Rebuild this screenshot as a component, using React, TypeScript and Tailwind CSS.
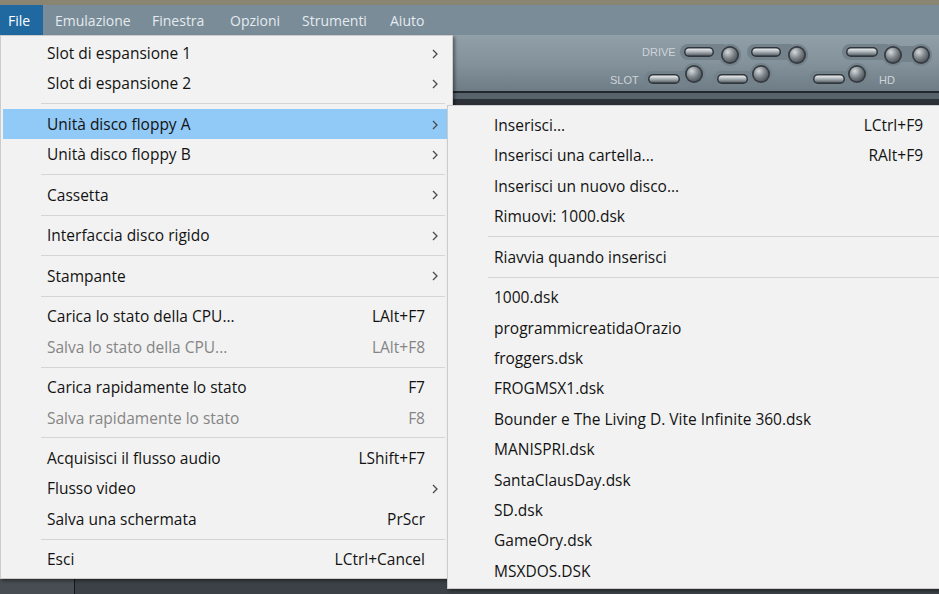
import React from 'react';

type Item =
  | 'sep'
  | { label: string; key?: string; sub?: boolean; disabled?: boolean; active?: boolean };

const MENUBAR = [
  { label: 'File', w: 'w-[43px]', pl: 'pl-[8px]', active: true },
  { label: 'Emulazione', w: 'w-[97px]', pl: 'pl-[12px]' },
  { label: 'Finestra', w: 'w-[78px]', pl: 'pl-[12px]' },
  { label: 'Opzioni', w: 'w-[73px]', pl: 'pl-[12px]' },
  { label: 'Strumenti', w: 'w-[87px]', pl: 'pl-[11px]' },
  { label: 'Aiuto', w: 'w-[58px]', pl: 'pl-[12px]' },
];

const FILE_MENU: Item[] = [
  { label: 'Slot di espansione 1', sub: true },
  { label: 'Slot di espansione 2', sub: true },
  'sep',
  { label: 'Unità disco floppy A', sub: true, active: true },
  { label: 'Unità disco floppy B', sub: true },
  'sep',
  { label: 'Cassetta', sub: true },
  'sep',
  { label: 'Interfaccia disco rigido', sub: true },
  'sep',
  { label: 'Stampante', sub: true },
  'sep',
  { label: 'Carica lo stato della CPU...', key: 'LAlt+F7' },
  { label: 'Salva lo stato della CPU...', key: 'LAlt+F8', disabled: true },
  'sep',
  { label: 'Carica rapidamente lo stato', key: 'F7' },
  { label: 'Salva rapidamente lo stato', key: 'F8', disabled: true },
  'sep',
  { label: 'Acquisisci il flusso audio', key: 'LShift+F7' },
  { label: 'Flusso video', sub: true },
  { label: 'Salva una schermata', key: 'PrScr' },
  'sep',
  { label: 'Esci', key: 'LCtrl+Cancel' },
];

const FLOPPY_MENU: Item[] = [
  { label: 'Inserisci...', key: 'LCtrl+F9' },
  { label: 'Inserisci una cartella...', key: 'RAlt+F9' },
  { label: 'Inserisci un nuovo disco...' },
  { label: 'Rimuovi: 1000.dsk' },
  'sep',
  { label: 'Riavvia quando inserisci' },
  'sep',
  { label: '1000.dsk' },
  { label: 'programmicreatidaOrazio' },
  { label: 'froggers.dsk' },
  { label: 'FROGMSX1.dsk' },
  { label: 'Bounder e The Living D. Vite Infinite 360.dsk' },
  { label: 'MANISPRI.dsk' },
  { label: 'SantaClausDay.dsk' },
  { label: 'SD.dsk' },
  { label: 'GameOry.dsk' },
  { label: 'MSXDOS.DSK' },
];

function Chevron() {
  return (
    <svg width="6" height="10" viewBox="0 0 6 10" className="ml-[7px]">
      <path d="M1 1 L5 5 L1 9" fill="none" stroke="#4a4a4a" strokeWidth="1.3" />
    </svg>
  );
}

function MenuRows({ items }: { items: Item[] }) {
  return (
    <>
      {items.map((it, i) =>
        it === 'sep' ? (
          <div key={i} className="flex h-[10.1px] items-center">
            <div className="ml-[38px] mr-[5px] h-px flex-1 bg-[#d5d5d5]" />
          </div>
        ) : (
          <div
            key={i}
            className={`flex h-[30.4px] items-center pl-[44px] pt-[1px] ${it.active ? 'bg-[#91c9f7]' : ''} ${it.disabled ? 'text-[#858585]' : 'text-[#121212]'}`}
          >
            <span className="flex-1 whitespace-nowrap">{it.label}</span>
            {it.key && <span className="whitespace-nowrap">{it.key}</span>}
            <span className="flex w-[25px] items-center">{it.sub && <Chevron />}</span>
          </div>
        ),
      )}
    </>
  );
}

function Pill({ x, y, w }: { x: number; y: number; w: number }) {
  return (
    <g>
      <rect x={x} y={y} width={w} height={10} rx={5} fill="#2f353a" />
      <rect x={x + 1.5} y={y + 1.5} width={w - 3} height={7} rx={3.5} fill="url(#pill)" />
    </g>
  );
}

function Knob({ cx, cy }: { cx: number; cy: number }) {
  return (
    <g>
      <circle cx={cx} cy={cy} r={9} fill="#353b40" />
      <circle cx={cx} cy={cy} r={7.3} fill="url(#knob)" />
    </g>
  );
}

function Controls() {
  const row1 = [
    { px: 684, pw: 30, kx: 730 },
    { px: 751, pw: 30, kx: 797 },
    { px: 846, pw: 32, kx: 893 },
  ];
  const row2 = [
    { px: 648, pw: 32, kx: 694 },
    { px: 717, pw: 31, kx: 761 },
    { px: 813, pw: 32, kx: 857 },
  ];
  return (
    <svg width="339" height="56" viewBox="600 35 339 56" className="ml-auto">
      <defs>
        <linearGradient id="pill" x1="0" y1="0" x2="0" y2="1">
          <stop offset="0" stopColor="#eef1f2" />
          <stop offset="0.5" stopColor="#a9b0b5" />
          <stop offset="1" stopColor="#5a6267" />
        </linearGradient>
        <radialGradient id="knob" cx="0.35" cy="0.3" r="0.8">
          <stop offset="0" stopColor="#d5d9dc" />
          <stop offset="0.55" stopColor="#7c848a" />
          <stop offset="1" stopColor="#474e53" />
        </radialGradient>
      </defs>
      <g fill="#74828b">
        {row1.map((g, i) => (
          <g key={i}>
            <rect x={g.px - 4} y={44} width={g.kx - g.px + 4} height={16} rx={8} />
            <circle cx={g.kx} cy={55} r={11} />
          </g>
        ))}
        <rect x={893} y={46} width={28} height={16} />
        <circle cx={921} cy={55} r={11} />
        {row2.map((g, i) => (
          <g key={i}>
            <rect x={g.px - 4} y={71} width={g.kx - g.px + 4} height={16} rx={8} />
            <circle cx={g.kx} cy={74} r={11} />
          </g>
        ))}
      </g>
      {row1.map((g, i) => (
        <g key={i}>
          <Pill x={g.px} y={47} w={g.pw} />
          <Knob cx={g.kx} cy={55} />
        </g>
      ))}
      <Knob cx={921} cy={55} />
      {row2.map((g, i) => (
        <g key={i}>
          <Pill x={g.px} y={74} w={g.pw} />
          <Knob cx={g.kx} cy={74} />
        </g>
      ))}
      <g fontFamily="'Liberation Sans', Arial, sans-serif" fontSize="11" fill="#cdd4d9">
        <text x={642} y={56}>DRIVE</text>
        <text x={610} y={84}>SLOT</text>
        <text x={879} y={84}>HD</text>
      </g>
    </svg>
  );
}

export default function App() {
  return (
    <div className="relative flex h-[594px] w-[939px] flex-col overflow-hidden bg-[#3d4348] font-['Open_Sans','Noto_Sans',sans-serif]">
      <div className="h-[5px] bg-[#8a8572]" />
      <div className="flex h-[30px] bg-[#798c98] text-[14px] text-[#e4eaee]">
        {MENUBAR.map((m) => (
          <div
            key={m.label}
            className={`flex items-center ${m.w} ${m.pl} ${m.active ? 'bg-[#1f69a0] text-white' : ''}`}
          >
            {m.label}
          </div>
        ))}
      </div>
      <div className="flex h-[56px] bg-gradient-to-b from-[#919fa8] via-[#83929b] to-[#6e7c85]">
        <Controls />
      </div>
      <div className="h-[2px] bg-[#22272b]" />
      <div className="h-[6px] bg-[#57626a]" />
      <div className="h-[6px] bg-[#2b3137]" />
      <div className="flex flex-1">
        <div className="w-[75px] border-r border-[#15181b] bg-[#474d52]" />
        <div className="flex-1 bg-[#3b4146]" />
      </div>

      {/* File menu */}
      <div className="absolute left-0 top-[35px] w-[453px] border border-[#cccccc] bg-[#f2f2f2] px-[2px] pb-[3px] pt-[2px] text-[15.5px] shadow-[2px_2px_3px_rgba(0,0,0,0.4)]">
        <MenuRows items={FILE_MENU} />
      </div>

      {/* Floppy A submenu */}
      <div className="absolute left-[447px] top-[105px] w-[504px] border border-[#cccccc] bg-[#f2f2f2] px-[2px] pb-[2px] pt-[4px] text-[15.5px] shadow-[2px_2px_3px_rgba(0,0,0,0.4)]">
        <MenuRows items={FLOPPY_MENU} />
      </div>
    </div>
  );
}
